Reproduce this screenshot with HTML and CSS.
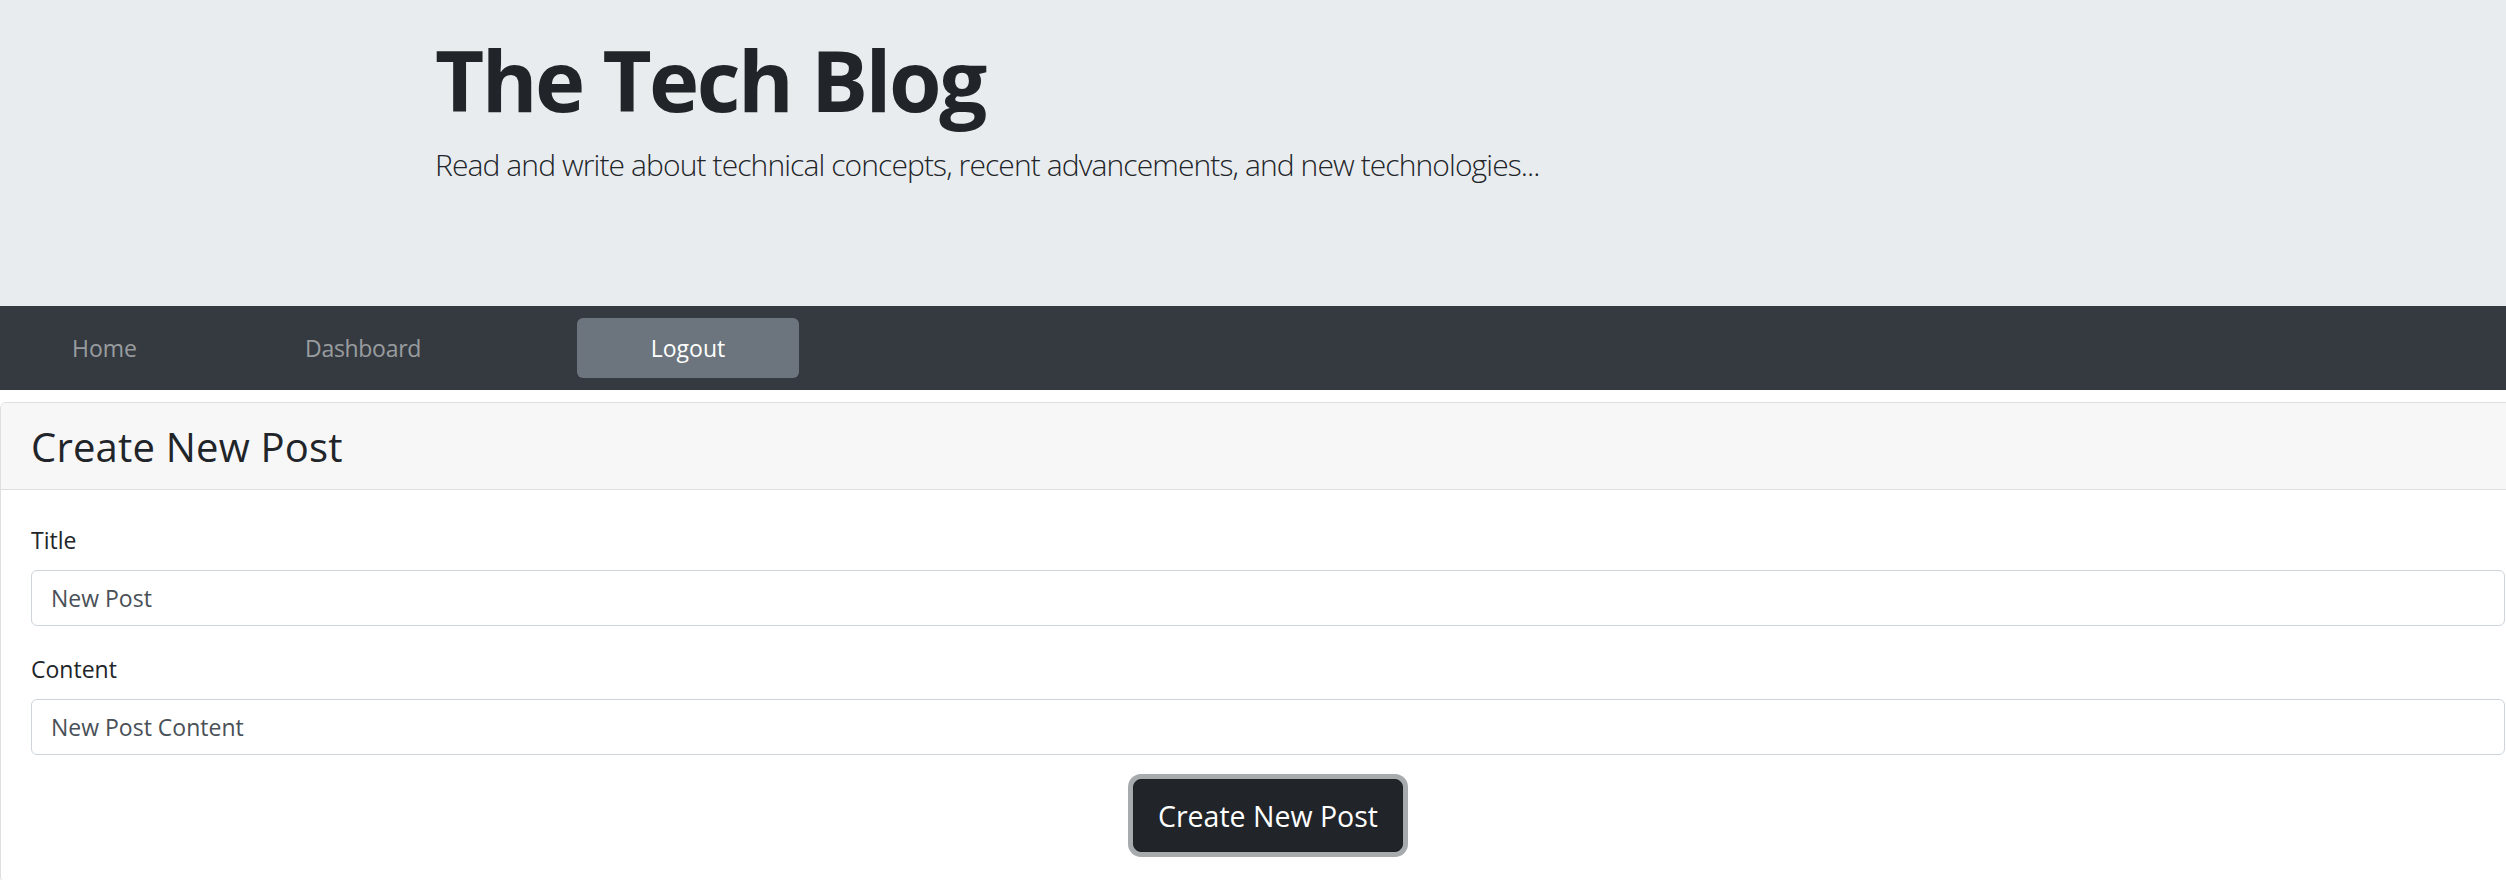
FILE: index.html
```html
<!DOCTYPE html>
<html lang="en">
<head>
<meta charset="utf-8">
<title>The Tech Blog</title>
<link rel="stylesheet" href="styles.css">
</head>
<body>
<header class="jumbotron">
  <h1 class="site-title">The Tech Blog</h1>
  <p class="lead">Read and write about technical concepts, recent advancements, and new technologies...</p>
</header>
<nav class="navbar">
  <a class="nav-link nav-home" href="#">Home</a>
  <a class="nav-link nav-dash" href="#">Dashboard</a>
  <a class="nav-btn" href="#">Logout</a>
</nav>
<main class="card">
  <div class="card-header">
    <h2 class="card-title">Create New Post</h2>
  </div>
  <form class="card-body">
    <div class="form-group">
      <label class="form-label" for="title">Title</label>
      <input class="form-control" id="title" type="text" value="New Post">
    </div>
    <div class="form-group">
      <label class="form-label" for="content">Content</label>
      <input class="form-control" id="content" type="text" value="New Post Content">
    </div>
    <div class="actions">
      <button class="btn-dark" type="button">Create New Post</button>
    </div>
  </form>
</main>
</body>
</html>
```
FILE: styles.css
```css
html, body {
  margin: 0;
  padding: 0;
  overflow: hidden;
  background: #ffffff;
}
body {
  font-family: "Open Sans", "Noto Sans", "Liberation Sans", sans-serif;
  color: #212529;
  width: 2506px;
}

.jumbotron {
  background: #e9ecef;
  height: 306px;
  box-sizing: border-box;
  padding: 28px 0 0 435px;
}
.site-title {
  margin: 0;
  font-size: 85px;
  line-height: 1.2;
  font-weight: 700;
  letter-spacing: -2.5px;
  color: #212529;
}
.lead {
  margin: 12px 0 0;
  font-size: 30px;
  line-height: 1.5;
  font-weight: 300;
  letter-spacing: -0.9px;
  color: #212529;
}

.navbar {
  background: #343a40;
  height: 84px;
  display: flex;
  align-items: center;
  padding-left: 72px;
}
.nav-link {
  font-size: 23px;
  color: rgba(255, 255, 255, 0.5);
  text-decoration: none;
}
.nav-dash {
  margin-left: 168px;
  letter-spacing: -0.3px;
}
.nav-btn {
  margin-left: 156px;
  width: 222px;
  height: 60px;
  box-sizing: border-box;
  background: #6c757d;
  border-radius: 6px;
  color: #ffffff;
  font-size: 23px;
  text-decoration: none;
  display: flex;
  align-items: center;
  justify-content: center;
}

.card {
  display: block;
  margin-top: 12px;
  width: 2536px;
  border: 1px solid #dfdfdf;
  border-radius: 6px;
  box-sizing: border-box;
}
.card-header {
  background: #f7f7f7;
  border-bottom: 1px solid #dfdfdf;
  border-radius: 6px 6px 0 0;
  padding: 20px 30px 18px;
}
.card-title {
  margin: 0;
  font-size: 40px;
  line-height: 48px;
  font-weight: 500;
  letter-spacing: 0.2px;
  color: #212529;
}
.card-body {
  padding: 34px 30px 30px;
  display: flex;
  flex-direction: column;
}
.form-group {
  display: flex;
  flex-direction: column;
  margin-bottom: 27px;
}
.form-label {
  font-size: 23px;
  line-height: 32px;
  margin-bottom: 14px;
  color: #212529;
}
.form-control {
  height: 56px;
  box-sizing: border-box;
  border: 1px solid #ced4da;
  border-radius: 6px;
  padding: 0 19px;
  font-family: inherit;
  font-size: 23px;
  color: #495057;
  background: #ffffff;
  outline: none;
}
.actions {
  display: flex;
  justify-content: center;
  margin-top: -3px;
}
.btn-dark {
  width: 270px;
  height: 73px;
  background: #212529;
  color: #ffffff;
  border: 1px solid #1d2124;
  border-radius: 8px;
  box-shadow: 0 0 0 5px rgba(82, 88, 93, 0.5);
  font-family: inherit;
  font-size: 28.5px;
}
```
